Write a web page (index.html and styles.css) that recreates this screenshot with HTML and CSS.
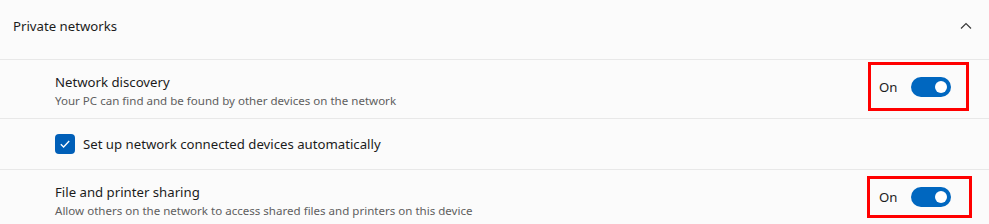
FILE: index.html
```html
<!DOCTYPE html>
<html lang="en">
<head>
    <meta charset="UTF-8">
    <title>Private networks</title>
    <link rel="stylesheet" href="styles.css">
</head>
<body>

<div class="panel">
    <div class="panel-header">
        <span>Private networks</span>
        <svg class="chevron" width="14" height="10" viewBox="0 0 14 10">
            <path d="M2 7.5 L7 2.5 L12 7.5" fill="none" stroke="#3a3a3a" stroke-width="1.2"/>
        </svg>
    </div>

    <div class="setting-row">
        <div class="setting-text">
            <div class="setting-title">Network discovery</div>
            <div class="setting-desc">Your PC can find and be found by other devices on the network</div>
        </div>
        <div class="toggle-box box-one">
            <span class="toggle-label">On</span>
            <span class="toggle"><span class="knob"></span></span>
        </div>
    </div>

    <div class="check-row">
        <span class="checkbox">
            <svg width="12" height="10" viewBox="0 0 12 10">
                <path d="M1.8 5.2 L4.6 8 L10.2 2" fill="none" stroke="#fff" stroke-width="1.3"/>
            </svg>
        </span>
        <span class="check-label">Set up network connected devices automatically</span>
    </div>

    <div class="setting-row last">
        <div class="setting-text">
            <div class="setting-title">File and printer sharing</div>
            <div class="setting-desc">Allow others on the network to access shared files and printers on this device</div>
        </div>
        <div class="toggle-box box-two">
            <span class="toggle-label">On</span>
            <span class="toggle"><span class="knob"></span></span>
        </div>
    </div>
</div>

</body>
</html>
```

FILE: styles.css
```css
* {
    margin: 0;
    padding: 0;
    box-sizing: border-box;
}

body {
    background: #f3f3f3;
    font-family: "Noto Sans", "Open Sans", sans-serif;
    color: #1b1b1b;
    width: 989px;
    height: 224px;
    overflow: hidden;
}

.panel {
    background: #fbfbfb;
}

.panel-header {
    height: 60px;
    display: flex;
    align-items: center;
    justify-content: space-between;
    padding: 0 16px 7px 13px;
    font-size: 13.2px;
    border-bottom: 1px solid #e8e8e8;
}

.setting-row {
    height: 59px;
    display: flex;
    align-items: center;
    justify-content: space-between;
    padding: 0 17px 0 55px;
    border-bottom: 1px solid #e8e8e8;
}

.setting-row.last {
    border-bottom: none;
    height: 58px;
}

.setting-text {
    margin-top: 3px;
}

.setting-title {
    font-size: 13.2px;
    line-height: 19px;
}

.setting-desc {
    font-size: 11.55px;
    line-height: 17px;
    color: #5f5f5f;
}

.toggle-box {
    display: flex;
    align-items: center;
    border: 3px solid #ff0000;
    padding: 0 15px 0 8px;
}

.box-one {
    width: 101px;
    height: 49px;
    margin-bottom: 5px;
    margin-right: 3px;
}

.box-two {
    width: 105px;
    height: 42px;
    margin-bottom: 4px;
    padding-left: 9px;
}

.toggle-label {
    font-size: 13.2px;
    width: 32px;
}

.toggle {
    width: 40px;
    height: 20px;
    border-radius: 10px;
    background: #0067c0;
    display: flex;
    align-items: center;
    justify-content: flex-end;
    padding-right: 4px;
}

.knob {
    width: 12px;
    height: 12px;
    border-radius: 50%;
    background: #fff;
}

.check-row {
    height: 51px;
    display: flex;
    align-items: center;
    padding-left: 55px;
    border-bottom: 1px solid #e8e8e8;
}

.checkbox {
    width: 20px;
    height: 20px;
    border-radius: 4px;
    background: #005fb8;
    display: flex;
    align-items: center;
    justify-content: center;
    margin-right: 8px;
}

.check-label {
    font-size: 13.2px;
}
```
